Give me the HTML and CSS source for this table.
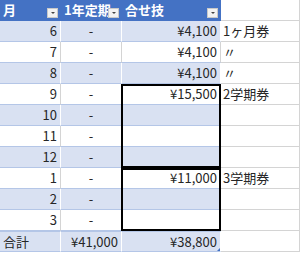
FILE: index.html
```html
<!DOCTYPE html>
<html lang="ja">
<head>
<meta charset="utf-8">
<link rel="stylesheet" href="styles.css">
</head>
<body>
<div class="sheet">
  <div class="row head">
    <div class="c c1"><span class="ht">月</span><span class="dd"></span></div>
    <div class="c c2"><span class="ht">1年定期</span><span class="dd"></span></div>
    <div class="c c3"><span class="ht">合せ技</span><span class="dd"></span></div>
    <div class="c c4"></div>
  </div>
  <div class="row band"><div class="c c1 r">6</div><div class="c c2 m">-</div><div class="c c3 r">¥4,100</div><div class="c c4">1ヶ月券</div></div>
  <div class="row"><div class="c c1 r">7</div><div class="c c2 m">-</div><div class="c c3 r">¥4,100</div><div class="c c4">〃</div></div>
  <div class="row band"><div class="c c1 r">8</div><div class="c c2 m">-</div><div class="c c3 r">¥4,100</div><div class="c c4">〃</div></div>
  <div class="row"><div class="c c1 r">9</div><div class="c c2 m">-</div><div class="c c3 r bx bt">¥15,500</div><div class="c c4">2学期券</div></div>
  <div class="row band"><div class="c c1 r">10</div><div class="c c2 m">-</div><div class="c c3 r bx"></div><div class="c c4"></div></div>
  <div class="row"><div class="c c1 r">11</div><div class="c c2 m">-</div><div class="c c3 r bx"></div><div class="c c4"></div></div>
  <div class="row band"><div class="c c1 r">12</div><div class="c c2 m">-</div><div class="c c3 r bx bb"></div><div class="c c4"></div></div>
  <div class="row"><div class="c c1 r">1</div><div class="c c2 m">-</div><div class="c c3 r bx bt">¥11,000</div><div class="c c4">3学期券</div></div>
  <div class="row band"><div class="c c1 r">2</div><div class="c c2 m">-</div><div class="c c3 r bx"></div><div class="c c4"></div></div>
  <div class="row"><div class="c c1 r">3</div><div class="c c2 m">-</div><div class="c c3 r bx bb"></div><div class="c c4"></div></div>
  <div class="row band total"><div class="c c1">合計</div><div class="c c2 r">¥41,000</div><div class="c c3 r rs">¥38,800</div><div class="c c4"></div></div>
</div>
</body>
</html>
```
FILE: styles.css
```css
html, body {
  margin: 0;
  padding: 0;
  background: #ffffff;
}
body {
  font-family: "Noto Sans CJK JP", "Noto Sans", sans-serif;
  font-size: 13px;
  color: #262626;
}
.sheet {
  width: 300px;
  overflow: hidden;
}
.row {
  display: flex;
  height: 21px;
}
.c {
  box-sizing: border-box;
  height: 21px;
  line-height: 20px;
  border-right: 1px solid #d4d4d4;
  border-bottom: 1px solid #b4c6e7;
  padding: 0 3px;
  white-space: nowrap;
  overflow: hidden;
  position: relative;
}
.c1 { width: 61px; }
.c2 { width: 61px; }
.c3 { width: 99px; overflow: visible; }
.c4 { width: 79px; border-bottom-color: #d4d4d4; padding-left: 2px; }
.r { text-align: right; }
.m { text-align: center; }
.band .c1, .band .c2, .band .c3 {
  background: #d9e1f2;
  border-right-color: #ffffff;
}
.head .c1, .head .c2, .head .c3 {
  background: #4472c4;
  color: #ffffff;
  font-weight: bold;
  border-right-color: #4472c4;
  border-bottom-color: #4472c4;
}
.head .c4 { border-bottom-color: #d4d4d4; }
.ht {
  position: relative;
}
.dd {
  position: absolute;
  right: 2px;
  top: 8px;
  width: 11px;
  height: 10px;
  box-sizing: border-box;
  background: #f2f2f2;
  border: 1px solid #c8c8c8;
}
.dd::after {
  content: "";
  position: absolute;
  left: 3px;
  top: 3px;
  border-left: 2px solid transparent;
  border-right: 2px solid transparent;
  border-top: 2px solid #444;
}
.bx::after {
  content: "";
  position: absolute;
  left: -1px;
  right: -1px;
  top: 0;
  bottom: -1px;
  border-left: 2px solid #000;
  border-right: 2px solid #000;
  pointer-events: none;
}
.bt::after { border-top: 2px solid #000; }
.bb::after { border-bottom: 2px solid #000; }
.total .c1, .total .c2, .total .c3 {
  border-top: 1px solid #b4c6e7;
  line-height: 19px;
}
.rs::before {
  content: "";
  position: absolute;
  right: 0;
  bottom: 0;
  border-left: 3px solid transparent;
  border-bottom: 3px solid #4472c4;
}
```
